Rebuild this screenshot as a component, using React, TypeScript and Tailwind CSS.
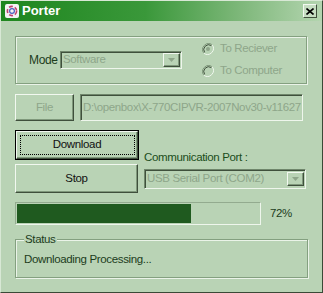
import React from "react";

const font = { fontFamily: '"Liberation Sans", Arial, sans-serif' };

const Raised: React.FC<{ className?: string; children?: React.ReactNode }> = ({ className = "", children }) => (
  <div
    className={`flex items-center justify-center border border-t-[#f2f8f0] border-l-[#f2f8f0] border-r-[#3f4f3c] border-b-[#3f4f3c] shadow-[inset_-1px_-1px_0_#7f987b] bg-[#b9d3b5] ${className}`}
  >
    {children}
  </div>
);

const Sunken: React.FC<{ className?: string; children?: React.ReactNode }> = ({ className = "", children }) => (
  <div
    className={`flex items-center border border-t-[#6f866b] border-l-[#6f866b] border-r-[#eef6ec] border-b-[#eef6ec] shadow-[inset_1px_1px_0_#3f503c] ${className}`}
  >
    {children}
  </div>
);

const Arrow = () => (
  <Raised className="w-[17px] h-[14px] mr-[1px] shrink-0">
    <svg width="7" height="4" viewBox="0 0 7 4">
      <path d="M0 0h7L3.5 4z" fill="#8ea68a" />
    </svg>
  </Raised>
);

const Radio: React.FC<{ checked?: boolean }> = ({ checked }) => (
  <svg width="12" height="12" viewBox="0 0 12 12">
    <path d="M10.2 1.8A6 6 0 0 0 1.8 10.2" fill="none" stroke="#7f987b" strokeWidth="1" />
    <path d="M9.4 2.6A4.9 4.9 0 0 0 2.6 9.4" fill="none" stroke="#3f503c" strokeWidth="1" />
    <path d="M1.8 10.2A6 6 0 0 0 10.2 1.8" fill="none" stroke="#eef6ec" strokeWidth="1" />
    {checked && <circle cx="6" cy="6" r="2" fill="#8ea68a" />}
  </svg>
);

export default function App() {
  return (
    <div
      className="relative w-[323px] h-[293px] overflow-hidden bg-[#b9d3b5] border border-t-[#d8e8d5] border-l-[#d8e8d5] border-r-[#3a4a37] border-b-[#3a4a37] text-[11.5px] tracking-[-0.35px] whitespace-nowrap"
      style={font}
    >
      {/* title bar */}
      <div className="h-[20px] flex items-center bg-[linear-gradient(to_right,#1e861e_0%,#3a983a_45%,#7fb87b_75%,#b4d5b0_100%)] px-[4px] tracking-normal">
        <svg width="14" height="14" viewBox="0 0 14 14">
          <rect x="0" y="0" width="14" height="14" rx="2" fill="#f4f4f4" />
          <circle cx="7" cy="7" r="4.6" fill="none" stroke="#c04070" strokeWidth="1.6" strokeDasharray="4 2" />
          <circle cx="7" cy="7" r="2.4" fill="none" stroke="#4a5fc0" strokeWidth="1.2" />
        </svg>
        <span className="ml-[3px] text-white font-bold text-[13px]">Porter</span>
        <div className="ml-auto mr-[1px] w-[14px] h-[14px] flex items-center justify-center bg-[#c6ddc2] border border-t-[#f2f8f0] border-l-[#f2f8f0] border-r-[#3f4f3c] border-b-[#3f4f3c]">
          <svg width="8" height="7" viewBox="0 0 8 7">
            <path d="M0.5 0.5L7.5 6.5M7.5 0.5L0.5 6.5" stroke="#000" strokeWidth="1.6" />
          </svg>
        </div>
      </div>

      <div className="pl-[14px] pr-[14px] flex flex-col">
        {/* mode group */}
        <div className="mt-[15px] h-[48px] w-[292px] flex items-center border border-[#84a080] shadow-[1px_1px_0_#eaf3e8,inset_1px_1px_0_#eaf3e8] pl-[13px]">
          <span className="w-[31px] text-[12px] text-[#1c3c1c]">Mode</span>
          <Sunken className="w-[122px] h-[18px] justify-between">
            <span className="pl-[2px] text-[#8ea68a]">Software</span>
            <Arrow />
          </Sunken>
          <div className="ml-[20px] flex flex-col">
            <div className="h-[22px] flex items-center gap-[6px]">
              <Radio checked />
              <span className="text-[#8ea68a]">To Reciever</span>
            </div>
            <div className="h-[22px] flex items-center gap-[6px]">
              <Radio />
              <span className="text-[#8ea68a]">To Computer</span>
            </div>
          </div>
        </div>

        {/* file row */}
        <div className="mt-[10px] flex h-[27px]">
          <Raised className="w-[59px] h-full text-[#8ea68a]">File</Raised>
          <Sunken className="ml-[6px] w-[223px] h-full overflow-hidden">
            <span className="pl-[2px] text-[#8ea68a]">D:\openbox\X-770CIPVR-2007Nov30-v11627</span>
          </Sunken>
        </div>

        {/* buttons and port */}
        <div className="mt-[9px] flex">
          <div className="flex flex-col w-[124px]">
            <div className="h-[30px] border border-black">
              <Raised className="h-full w-full">
                <div className="w-[115px] h-[20px] flex items-center justify-center border border-dotted border-black text-[#111]">
                  Download
                </div>
              </Raised>
            </div>
            <Raised className="mt-[4px] h-[29px] w-[123px] text-[#111]">Stop</Raised>
          </div>
          <div className="ml-[5px] flex flex-col pt-[20px]">
            <span className="h-[14px] leading-[14px] text-[#1b4d1b]">Communication Port :</span>
            <Sunken className="mt-[5px] w-[162px] h-[20px] justify-between">
              <span className="pl-[2px] text-[#8ea68a]">USB Serial Port (COM2)</span>
              <Arrow />
            </Sunken>
          </div>
        </div>

        {/* progress */}
        <div className="mt-[9px] flex items-center">
          <div className="w-[246px] h-[23px] p-[1px] border border-t-[#93ab8f] border-l-[#93ab8f] border-r-[#eef6ec] border-b-[#eef6ec]">
            <div className="h-full bg-[#1f5a1f]" style={{ width: "72%" }} />
          </div>
          <span className="ml-[9px] text-[#1c3c1c]">72%</span>
        </div>

        {/* status group */}
        <div className="relative mt-[14px] w-[293px] h-[39px] border border-[#84a080] shadow-[1px_1px_0_#eaf3e8,inset_1px_1px_0_#eaf3e8] flex items-center pl-[8px] pt-[3px]">
          <span className="absolute left-[8px] top-[-8px] px-[1px] bg-[#b9d3b5] leading-[14px] text-[#1c3c1c]">Status</span>
          <span className="text-[#1c3c1c]">Downloading Processing...</span>
        </div>
      </div>
    </div>
  );
}
